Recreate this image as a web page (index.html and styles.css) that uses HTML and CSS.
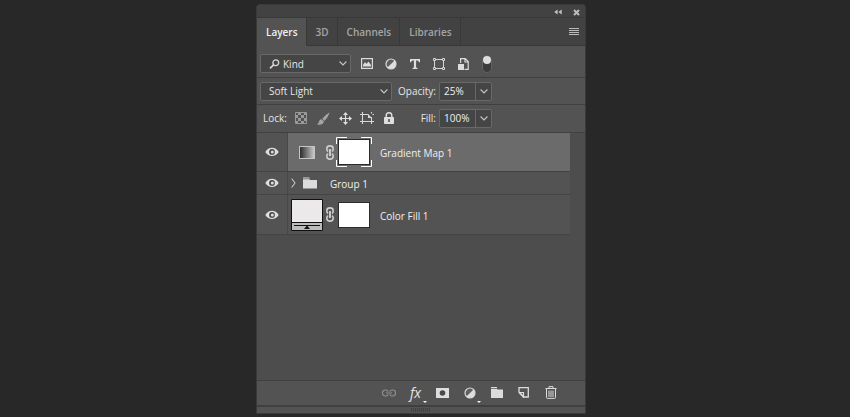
FILE: index.html
```
<!DOCTYPE html>
<html lang="en">
<head>
    <meta charset="utf-8">
    <title>Layers</title>
    <link rel="stylesheet" href="styles.css">
</head>
<body>
<!--shared icons-->
<svg class="sprite" width="0" height="0">
    <symbol id="chevron" viewBox="0 0 8 5"><path d="M.6.5L4 4 7.4.5" fill="none" stroke="#c4c4c4" stroke-width="1.1"/></symbol>
    <symbol id="eye" viewBox="0 0 14 10">
        <path d="M.3 5C3.3-.7 10.7-.7 13.7 5 10.7 10.4 3.3 10.4.3 5z" fill="#dedede"/>
        <circle cx="7" cy="4.9" r="2.9" fill="#484848"/>
        <circle cx="7.3" cy="4.9" r="1.5" fill="#dedede"/>
    </symbol>
    <symbol id="chain" viewBox="0 0 8 15">
        <g fill="none" stroke="#cecece" stroke-width="1.6">
            <path d="M2.2 6.2Q.9 5.8.9 4.4V3.2Q.9.9 4 .9t3.1 2.3v1.2Q7.1 5.8 5.8 6.2"/>
            <path d="M2.2 8.8Q.9 9.2.9 10.6v1.2q0 2.3 3.1 2.3t3.1-2.3v-1.2Q7.1 9.2 5.8 8.8"/>
            <path d="M4 4v7" stroke-width="1.9"/>
        </g>
    </symbol>
    <symbol id="folder" viewBox="0 0 14 12"><path d="M0 .5h6.5v1H0zM0 2.2h6.5l.8.8H14v8.500H0z" fill="#dcdcdc"/></symbol>
    <symbol id="contrast" viewBox="0 0 12 12">
        <circle cx="6" cy="6" r="5" fill="#606060" stroke="#d8d8d8" stroke-width="1.2"/>
        <path d="M9.6 2.4A5.1 5.1 0 0 1 2.4 9.6z" fill="#dedede"/>
    </symbol>
</svg>

<main class="panel">
    <header class="titlebar">
        <button class="icon-button" aria-label="Collapse"><svg width="8" height="6" viewBox="0 0 8 6"><path d="M3.6.5v5L.3 3zM7.7.5v5L4.4 3z" fill="#c4c4c4"/></svg></button>
        <button class="icon-button" aria-label="Close"><svg width="7" height="7" viewBox="0 0 7 7"><path d="M1 1l5 5M6 1L1 6" stroke="#bdbdbd" stroke-width="2"/></svg></button>
    </header>

    <nav class="tabs">
        <button class="tab active">Layers</button>
        <button class="tab">3D</button>
        <button class="tab">Channels</button>
        <button class="tab">Libraries</button>
        <button class="icon-button tabs-menu" aria-label="Panel menu"><svg width="10" height="8" viewBox="0 0 10 8"><path d="M0 .5h10M0 2.5h10M0 4.5h10M0 6.5h10" stroke="#bababa"/></svg></button>
    </nav>

    <!--filter row-->
    <div class="row filter-row">
        <div class="dropdown kind">
            <select aria-label="Filter type"><option>Kind</option></select>
            <svg class="search" width="11" height="10" viewBox="0 0 11 10"><circle cx="6.8" cy="3.7" r="2.9" fill="none" stroke="#d8d8d8" stroke-width="1.3"/><path d="M4.6 5.9L1 9.3" stroke="#d8d8d8" stroke-width="1.6"/></svg>
            <svg class="arrow" width="8" height="5"><use href="#chevron"/></svg>
        </div>
        <div class="icons filter-icons">
            <button class="icon-button" aria-label="Pixel layers"><svg width="12" height="11" viewBox="0 0 12 11"><rect x=".6" y=".6" width="10.8" height="9.8" fill="none" stroke="#dcdcdc" stroke-width="1.2"/><path d="M2 8.5V7l2-3 1.6 2L7.4 3.4 10 7v1.5z" fill="#dcdcdc"/></svg></button>
            <button class="icon-button" aria-label="Adjustment layers"><svg width="12" height="12"><use href="#contrast"/></svg></button>
            <button class="icon-button" aria-label="Type layers"><svg width="10" height="10" viewBox="0 0 10 10"><path d="M0 0h10v3.2H8.9Q8.7 1.4 7.2 1.4H6.1v6.9q0 .7 1.4.7v1h-5V9q1.4 0 1.4-.7V1.4H2.8Q1.3 1.4 1.1 3.2H0z" fill="#dedede"/></svg></button>
            <button class="icon-button" aria-label="Shape layers"><svg width="12" height="12" viewBox="0 0 12 12"><g fill="none" stroke="#d6d6d6"><path d="M3 1.5h6M3 10.5h6M1.5 3v6M10.5 3v6"/><path d="M.5.5h2v2h-2zM9.5.5h2v2h-2zM.5 9.5h2v2h-2zM9.5 9.5h2v2h-2z"/></g></svg></button>
            <button class="icon-button" aria-label="Smart objects"><svg width="11" height="12" viewBox="0 0 11 12"><path d="M2.6 5V.6h4.6l3 3v7.8H6.5M7 .6V4h3.4" fill="none" stroke="#dcdcdc" stroke-width="1.2"/><path d="M0 6h6v6H0z" fill="#dcdcdc"/></svg></button>
        </div>
        <button class="switch" aria-label="Layer filtering"><span class="knob"></span></button>
    </div>

    <!--blend mode row-->
    <div class="row blend-row">
        <div class="dropdown blend">
            <select aria-label="Blend mode"><option>Soft Light</option></select>
            <svg class="arrow" width="8" height="5"><use href="#chevron"/></svg>
        </div>
        <label class="field-label" for="opacity">Opacity:</label>
        <div class="percent">
            <input id="opacity" type="text" value="25%">
            <button aria-label="Opacity slider"><svg width="8" height="5"><use href="#chevron"/></svg></button>
        </div>
    </div>

    <!--lock row-->
    <div class="row lock-row">
        <span class="lock-label">Lock:</span>
        <div class="icons lock-icons">
            <button class="icon-button" aria-label="Lock transparent pixels"><svg width="12" height="12" viewBox="0 0 12 12"><path d="M.5.5h11v11H.5z" fill="none" stroke="#999"/><path d="M3 1h3v2H3zM9 1h2v2H9zM1 3h2v3H1zM6 3h3v3H6zM3 6h3v3H3zM9 6h2v3H9zM1 9h2v2H1zM6 9h3v2H6z" fill="#999"/></svg></button>
            <button class="icon-button" aria-label="Lock image pixels"><svg width="13" height="13" viewBox="0 0 13 13"><path d="M12.7.2Q9 2.2 5.3 6.7L7.5 8.9Q11.5 4.8 12.7.2zM4.7 7.3Q2.4 7.3 2 9.5 1.6 11.5 0 12.4 5.8 13.6 6.9 9.5z" fill="#a4a4a4"/></svg></button>
            <button class="icon-button" aria-label="Lock position"><svg width="13" height="13" viewBox="0 0 13 13"><path d="M6.5 1.5v10M1.5 6.5h10" stroke="#dedede" stroke-width="1.2"/><path d="M6.5 0L9 3H4zM6.5 13L4 10h5zM0 6.5L3 4v5zM13 6.5L10 9V4z" fill="#dedede"/></svg></button>
            <button class="icon-button" aria-label="Lock artboard nesting"><svg width="14" height="12" viewBox="0 0 14 12"><path d="M2.5 0v12M0 2.5h8.5M0 9.5h14M11.5 5v7M12.5 2.5H14M11.5 0v1.5" fill="none" stroke="#d8d8d8" stroke-width="1.1"/><path d="M8 2l4 4H8z" fill="#d8d8d8"/></svg></button>
            <button class="icon-button" aria-label="Lock all"><svg width="10" height="12" viewBox="0 0 10 12"><path d="M2.2 6V3.5a2.8 2.8 0 0 1 5.6 0V6" fill="none" stroke="#dedede" stroke-width="1.4"/><rect y="5" width="10" height="7" rx=".8" fill="#dedede"/><path d="M5 7v3" stroke="#4a4a4a" stroke-width="1.5"/></svg></button>
        </div>
        <label class="field-label" for="fill">Fill:</label>
        <div class="percent">
            <input id="fill" type="text" value="100%">
            <button aria-label="Fill slider"><svg width="8" height="5"><use href="#chevron"/></svg></button>
        </div>
    </div>

    <!--layer list-->
    <div class="layers">
        <ul class="layer-list">
            <li class="layer selected">
                <button class="eye" aria-label="Hide Gradient Map 1"><svg width="14" height="10"><use href="#eye"/></svg></button>
                <div class="layer-body">
                    <div class="thumb"><div class="gradient-thumb"></div></div>
                    <svg class="chain" width="8" height="15"><use href="#chain"/></svg>
                    <div class="mask-frame">
                        <svg width="36" height="30" viewBox="0 0 36 30"><path d="M.5 7V.5H11M25 .5h10.5V7M.5 23v6.5H11M25 29.5h10.5V23" fill="none" stroke="#fff"/><rect x="2.5" y="2.5" width="31" height="25" fill="#fff" stroke="#2a2a2a"/></svg>
                    </div>
                    <span class="layer-name">Gradient Map 1</span>
                </div>
            </li>
            <li class="layer group">
                <button class="eye" aria-label="Hide Group 1"><svg width="14" height="10"><use href="#eye"/></svg></button>
                <div class="layer-body">
                    <button class="icon-button expand" aria-label="Expand group"><svg width="5" height="10" viewBox="0 0 5 10"><path d="M.6.5L4 5 .6 9.5" fill="none" stroke="#c4c4c4" stroke-width="1.1"/></svg></button>
                    <svg class="folder" width="14" height="12"><use href="#folder"/></svg>
                    <span class="layer-name">Group 1</span>
                </div>
            </li>
            <li class="layer">
                <button class="eye" aria-label="Hide Color Fill 1"><svg width="14" height="10"><use href="#eye"/></svg></button>
                <div class="layer-body">
                    <div class="thumb">
                        <svg width="32" height="32" viewBox="0 0 32 32"><path d="M.5.5h31v31H.5z" fill="#ebe9ea" stroke="#111"/><path d="M1 24h30v7H1z" fill="#bcbcbc"/><path d="M1 23.5h30M3 26.5h26" stroke="#111"/><path d="M16 26.5l3 3.5h-6z" fill="#111"/></svg>
                    </div>
                    <svg class="chain" width="8" height="15"><use href="#chain"/></svg>
                    <div class="mask-frame"><div class="mask"></div></div>
                    <span class="layer-name">Color Fill 1</span>
                </div>
            </li>
        </ul>
    </div>

    <!--bottom toolbar-->
    <footer class="toolbar">
        <button class="tool" aria-label="Link layers"><svg width="14" height="8" viewBox="0 0 14 8"><g fill="none" stroke="#929292" stroke-width="1.2"><path d="M6.2 2.6Q5.7 1 4 1h-.6a3 3 0 0 0 0 6H4q1.7 0 2.2-1.6M7.8 2.6Q8.3 1 10 1h.6a3 3 0 0 1 0 6H10Q8.3 7 7.8 5.4M4 4h6"/></g></svg></button>
        <button class="tool fx" aria-label="Layer style"><i>fx</i><span class="more"></span></button>
        <button class="tool" aria-label="Add mask"><svg width="13" height="10" viewBox="0 0 13 10"><path d="M0 0h13v10H0z" fill="#dedede"/><circle cx="6.5" cy="5" r="2.8" fill="#484848"/></svg></button>
        <button class="tool" aria-label="New adjustment layer"><svg width="12" height="12"><use href="#contrast"/></svg><span class="more"></span></button>
        <button class="tool" aria-label="New group"><svg width="12" height="11" viewBox="0 0 12 11"><path d="M0 0h6v1H0zM0 1.7h6l.6.8H12V11H0z" fill="#dcdcdc"/></svg></button>
        <button class="tool" aria-label="New layer"><svg width="11" height="11" viewBox="0 0 11 11"><path d="M1 5V.7h9.3V10H5.5" fill="none" stroke="#dcdcdc" stroke-width="1.3"/><path d="M.5 5.5h5V11" fill="none" stroke="#dcdcdc" stroke-width="1.2"/><path d="M.5 6l5 5V8.5L3 6z" fill="#dcdcdc"/></svg></button>
        <button class="tool" aria-label="Delete layer"><svg width="12" height="13" viewBox="0 0 12 13"><path d="M.5 2.5h11M4 2V.6h4V2M1.5 3v8.5q0 .9.9.9h7.2q.9 0 .9-.9V3M4 4.5V11M6 4.5V11M8 4.5V11" fill="none" stroke="#dcdcdc"/></svg></button>
    </footer>
    <div class="resize"><span class="grip"></span></div>
</main>
</body>
</html>
```
FILE: styles.css
```
* {
    box-sizing: border-box;
}

body {
    margin: 0;
    min-height: 100vh;
    padding: 4px 8px 3px 0;
    display: flex;
    justify-content: center;
    background-color: #282828;
    font-family: "Open Sans", "Noto Sans", sans-serif;
    font-size: 10px;
    line-height: 14px;
    color: #e6e6e6;
}

.sprite {
    position: absolute;
}

button,
input,
select {
    margin: 0;
    padding: 0;
    border: none;
    background: none;
    font: inherit;
    color: inherit;
}

svg {
    display: block;
    flex: none;
}

.panel {
    width: 100%;
    max-width: 330px;
    display: flex;
    flex-direction: column;
    background-color: #535353;
    border: 1px solid #3a3a3a;
    border-radius: 4px 4px 0 0;
    overflow: hidden;
}

.icon-button {
    display: flex;
    align-items: center;
    justify-content: center;
}

/* Title bar and tabs */
.titlebar {
    height: 13px;
    padding: 2px 5px 0 0;
    display: flex;
    align-items: center;
    justify-content: flex-end;
    gap: 11px;
    background-color: #424242;
    border-bottom: 1px solid #383838;
}

.tabs {
    height: 28px;
    display: flex;
    background-color: #424242;
}

.tab {
    padding: 0 8px 0 9px;
    border-right: 1px solid #383838;
    border-bottom: 1px solid #383838;
    font-weight: 600;
    color: #a6a6a6;
}

.tab.active {
    background-color: #535353;
    border-bottom-color: #535353;
    color: #f0f0f0;
}

.tabs-menu {
    flex: 1;
    justify-content: flex-end;
    padding-right: 6px;
    border-bottom: 1px solid #383838;
}

/* Option rows */
.row {
    height: 27px;
    padding: 0 3px;
    display: flex;
    align-items: center;
    border-bottom: 1px solid #404040;
}

.filter-row {
    height: 32px;
    padding-top: 4px;
}

.lock-row {
    height: 28px;
    padding-bottom: 1px;
}

.dropdown {
    display: grid;
    align-items: center;
    height: 19px;
    background-color: #454545;
    border: 1px solid #686868;
    border-radius: 2px;
}

.dropdown select,
.dropdown svg {
    grid-area: 1 / 1;
}

.dropdown select {
    appearance: none;
    width: 100%;
    padding-left: 8px;
}

.dropdown .arrow {
    justify-self: end;
    margin-right: 3px;
}

.dropdown .search {
    margin-left: 8px;
}

.kind {
    width: 91px;
}

.kind select {
    padding-left: 22px;
}

.blend {
    width: 132px;
}

.icons {
    display: flex;
}

.filter-icons {
    margin-left: 4px;
}

.filter-icons .icon-button {
    width: 24px;
    height: 18px;
}

.lock-icons .icon-button {
    width: 22px;
    height: 18px;
}

.switch {
    width: 10px;
    height: 18px;
    margin-left: 7px;
    display: flex;
    background-color: #3c3c3c;
    border: 1px solid #626262;
    border-radius: 5px;
    justify-content: center;
}

.knob {
    flex: none;
    width: 8px;
    height: 8px;
    border-radius: 50%;
    background-color: #dedede;
}

.lock-label {
    width: 30px;
    padding-left: 3px;
}

.field-label {
    width: 47px;
    padding-right: 3px;
    text-align: right;
}

.lock-row .field-label {
    width: 39px;
}

.percent {
    display: flex;
    width: 53px;
    height: 19px;
    background-color: #454545;
    border: 1px solid #686868;
    border-radius: 2px;
}

.percent input {
    flex: 1;
    min-width: 0;
    padding-left: 4px;
    color: #f0f0f0;
}

.percent button {
    width: 16px;
    display: flex;
    align-items: center;
    justify-content: center;
    border-left: 1px solid #686868;
}

/* Layer list */
.layers {
    flex: 1;
    padding-right: 15px;
    background-color: #4d4d4d;
}

.layer-list {
    margin: 0;
    padding: 0;
    list-style: none;
}

.layer {
    height: 40px;
    display: flex;
    background-color: #535353;
    border-bottom: 1px solid #444;
}

.layer.selected {
    height: 39px;
}

.layer.group {
    height: 23px;
}

.eye {
    width: 31px;
    display: flex;
    align-items: center;
    justify-content: center;
    border-right: 1px solid #474747;
}

.layer-body {
    flex: 1;
    display: flex;
    align-items: center;
    padding-left: 3px;
}

.selected .layer-body {
    background-color: #6b6b6b;
}

.thumb {
    width: 32px;
    display: flex;
    justify-content: center;
}

.gradient-thumb {
    width: 16px;
    height: 13px;
    border: 1px solid #c4c4c4;
    background: linear-gradient(to right, #2c2c2c, #c8c8c8);
}

.chain {
    margin-left: 3px;
}

.mask-frame {
    width: 36px;
    margin: 0 8px 0 2px;
    display: flex;
    justify-content: center;
}

.mask {
    width: 32px;
    height: 26px;
    background-color: #fff;
    border: 1px solid #2a2a2a;
}

.expand {
    width: 5px;
}

.folder {
    margin: 0 13px 0 7px;
}

.layer-name {
    padding-top: 2px;
    color: #f0f0f0;
}

/* Bottom toolbar */
.toolbar {
    height: 27px;
    padding: 0 21px 1px 0;
    display: flex;
    justify-content: flex-end;
    border-top: 1px solid #404040;
    border-bottom: 2px solid #404040;
}

.tool {
    position: relative;
    width: 27px;
    display: flex;
    align-items: center;
    justify-content: center;
}

.fx {
    font-size: 14px;
}

.more {
    position: absolute;
    right: 2px;
    bottom: 1px;
    border: 2px solid transparent;
    border-top-color: #fff;
    border-bottom: none;
}

.resize {
    height: 6px;
    display: flex;
    align-items: center;
    justify-content: center;
}

.grip {
    width: 20px;
    height: 4px;
    background: repeating-linear-gradient(to right, #404040 0 1px, #535353 1px 2px);
}
```
